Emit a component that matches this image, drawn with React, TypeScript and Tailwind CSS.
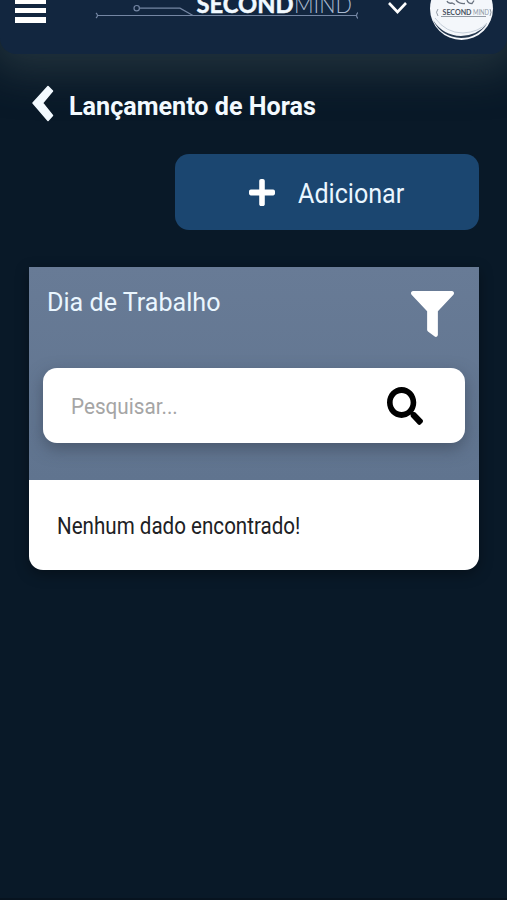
import type { ReactNode } from 'react';
import { FaFilter, FaPlus, FaSearch } from 'react-icons/fa';

function BrandLogo() {
  return (
    <svg className="h-[22px] w-[264px] shrink-0" viewBox="94 0 264 22" fill="none">
      <g stroke="#7486a3" strokeWidth="1.2">
        <path d="M96 13Q99 15.500 96 18M97 15.500H356M358 12.500Q355 15.500 358 18.500" />
        <circle cx="136.700" cy="8.200" r="2.700" />
        <path d="M139.500 8.200H180L193 15.500" />
      </g>
      <text
        x="196.500"
        y="12.800"
        fill="#f1f9ff"
        className="font-['Lato'] text-[24px] font-bold"
        stroke="#f1f9ff"
        strokeWidth=".5"
        textLength="97"
        lengthAdjust="spacingAndGlyphs"
      >
        SECOND
      </text>
      <text
        x="294"
        y="12.800"
        fill="#a9bad0"
        className="font-['Lato'] text-[24px] font-light"
        textLength="58"
        lengthAdjust="spacingAndGlyphs"
      >
        MIND
      </text>
    </svg>
  );
}

function Avatar() {
  return (
    <svg className="h-[42px] w-[64px] shrink-0" viewBox="430 0 64 42" fill="none">
      <circle cx="461.500" cy="8.500" r="31.500" fill="#f4f7fb" />
      <g stroke="#68727f" strokeWidth="1.300">
        <path d="M447 1q1 3 5 2l3 1.500M456 0q3 4 9 3.500M467 0q1 3.500 5 3.500l2-3" />
        <path d="M438 9q-3 3 0 7M490 9q2 3 0 7M441 16.500H486" strokeWidth=".7" />
      </g>
      <path d="M433 20Q443 35.500 461 36Q477 35.500 487 24Q477 38 461 38Q441 37 433 20Z" fill="#26384e" />
      <path d="M435 18Q446 33 463 33Q479 32 487 23" stroke="#b9c4d0" strokeWidth=".8" />
      <text
        x="442.500"
        y="15.200"
        fill="#48515e"
        className="font-['Lato'] text-[8px] font-bold"
        textLength="29"
        lengthAdjust="spacingAndGlyphs"
      >
        SECOND
      </text>
      <text
        x="473"
        y="15.200"
        fill="#8d97a3"
        className="font-['Lato'] text-[8px]"
        textLength="16"
        lengthAdjust="spacingAndGlyphs"
      >
        MIND
      </text>
    </svg>
  );
}

function Header() {
  return (
    <header className="flex h-[54px] shrink-0 items-start rounded-b-2xl bg-[#12263f] pl-[15px] shadow-[0_8px_40px_10px_rgba(50,66,74,0.6)]">
      <button aria-label="Menu" className="flex w-[31px] flex-col gap-1">
        <span className="h-1 w-full bg-white" />
        <span className="h-[5px] w-full bg-white" />
        <span className="h-[6px] w-full bg-white" />
      </button>
      <div className="ml-12">
        <BrandLogo />
      </div>
      <svg className="ml-[29px] h-[15px] w-[22px] shrink-0" viewBox="0 0 22 15" fill="none">
        <path d="M2 3L10.500 12L19 3" stroke="white" strokeWidth="2.600" />
      </svg>
      <div className="ml-[21px]">
        <Avatar />
      </div>
    </header>
  );
}

function Card({ title, children }: { title: string; children: ReactNode }) {
  return (
    <section className="mt-[37px] overflow-hidden rounded-b-[14px] bg-white shadow-[0_4px_14px_rgba(0,0,0,0.35)]">
      <div className="h-[213px] bg-linear-to-b from-[#687b96] to-[#60748f] px-[14px]">
        <div className="flex h-[101px] justify-between pl-1 pr-[11px]">
          <h2 className="mt-[19px] origin-left scale-x-[0.966] text-[26px] leading-8 whitespace-nowrap text-[#eaf6ff]">
            {title}
          </h2>
          <FaFilter preserveAspectRatio="none" className="mt-[24px] h-[46px] w-[43px] text-white" />
        </div>
        <div className="flex h-[75px] items-center rounded-[14px] bg-white pr-[42px] pl-7 shadow-[0_6px_16px_rgba(50,60,75,0.5)]">
          <input
            className="mt-[2px] w-[250px] origin-left scale-x-[0.94] text-[22px] outline-none placeholder:text-[#a5a5a5]"
            placeholder="Pesquisar..."
          />
          <FaSearch preserveAspectRatio="none" className="ml-auto h-[38px] w-9 text-black" />
        </div>
      </div>
      <div className="flex h-[90px] items-center px-7 pt-1 text-[#202124]">{children}</div>
    </section>
  );
}

export default function App() {
  return (
    <div className="flex h-[900px] w-[507px] flex-col overflow-hidden border-b-2 border-[#07131f] bg-[#091928] font-['Roboto',sans-serif]">
      <Header />
      <main className="flex flex-col pt-[28px] pr-7 pl-[29px]">
        <div className="flex h-12 items-center">
          <svg className="ml-[2px] h-12 w-6 shrink-0" viewBox="0 0 24 48">
            <path
              d="M2 21L17 4.500L21.500 9L11.500 21L21.500 33.500L17 38.500Z"
              fill="#f3faff"
              stroke="#f3faff"
              strokeWidth="1.500"
              strokeLinejoin="round"
            />
          </svg>
          <h1 className="mt-px ml-[14px] origin-left scale-x-[0.967] text-[26px] font-bold whitespace-nowrap text-[#f3faff]">
            Lançamento de Horas
          </h1>
        </div>

        <button className="mt-6 flex h-[76px] w-[304px] items-center self-end rounded-[14px] bg-[#1b4670] pl-[74px] text-white">
          <FaPlus preserveAspectRatio="none" className="h-[31px] w-[26px]" />
          <span className="mt-1 ml-[23px] origin-left scale-x-[0.93] text-[27px] text-[#eaf6ff]">Adicionar</span>
        </button>

        <Card title="Dia de Trabalho">
          <p className="mt-px origin-left scale-x-[0.895] text-[23px] whitespace-nowrap">Nenhum dado encontrado!</p>
        </Card>
      </main>
    </div>
  );
}
